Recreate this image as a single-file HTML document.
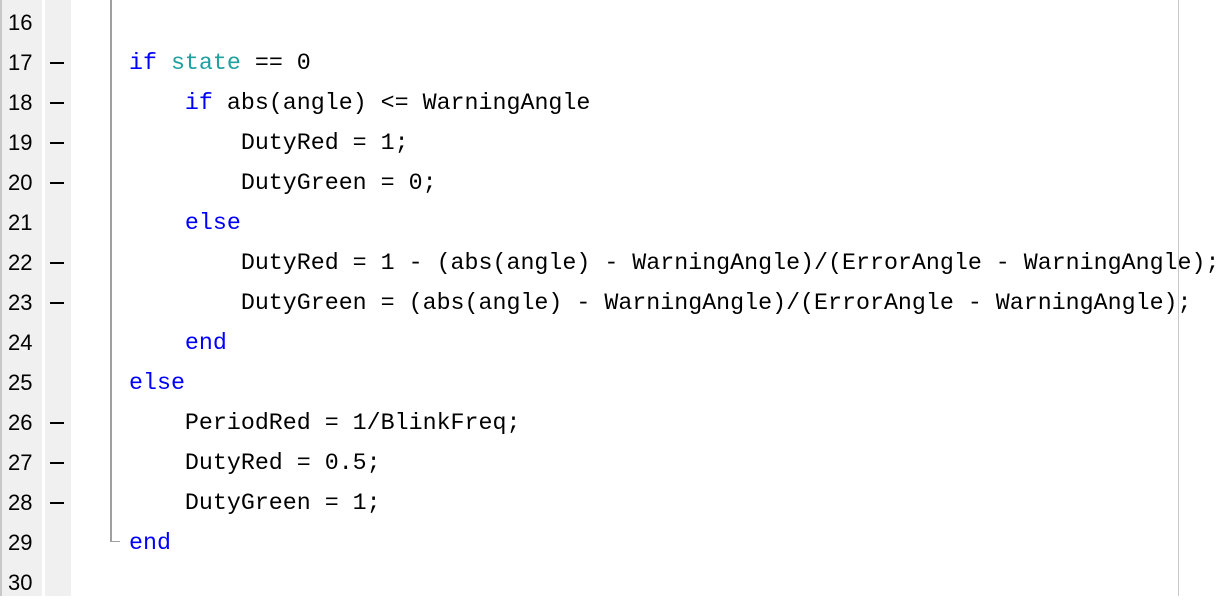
<!DOCTYPE html>
<html><head><style>
body{margin:0;width:1232px;height:596px;overflow:hidden;background:#fff;position:relative;font-family:"Liberation Mono",monospace;}
.g1{position:absolute;left:0;top:0;width:42px;height:596px;background:#f0f0f0;border-left:2px solid #c8c8c8;box-sizing:border-box}
.g2{position:absolute;left:45px;top:0;width:26px;height:596px;background:#f0f0f0}
.tree{position:absolute;left:110px;top:0;width:2px;height:542px;background:#a0a0a0}
.hook{position:absolute;left:110px;top:541px;width:10px;height:1px;background:#a0a0a0}
.rm{position:absolute;left:1178px;top:0;width:1px;height:596px;background:#c8c8c8}
.row{position:absolute;left:0;height:40px;line-height:40px;}
.n{position:absolute;left:8px;top:1px;width:34px;font-family:"Liberation Sans",sans-serif;font-size:22px;color:#000}
.d{position:absolute;left:50px;top:20px;width:14px;height:2px;background:#000}
.c{position:absolute;left:129px;top:1px;font-size:23.3px;white-space:pre;color:#000}
.k{color:#0000ff}.v{color:#20a0a0}
</style></head><body>
<div class="g1"></div><div class="g2"></div><div class="tree"></div><div class="hook"></div><div class="rm"></div>
<div class="row" style="top:2px"><span class="n">16</span></div>
<div class="row" style="top:42px"><span class="n">17</span><span class="d"></span><span class="c"><span class="k">if</span> <span class="v">state</span> == 0</span></div>
<div class="row" style="top:82px"><span class="n">18</span><span class="d"></span><span class="c">    <span class="k">if</span> abs(angle) &lt;= WarningAngle</span></div>
<div class="row" style="top:122px"><span class="n">19</span><span class="d"></span><span class="c">        DutyRed = 1;</span></div>
<div class="row" style="top:162px"><span class="n">20</span><span class="d"></span><span class="c">        DutyGreen = 0;</span></div>
<div class="row" style="top:202px"><span class="n">21</span><span class="c">    <span class="k">else</span></span></div>
<div class="row" style="top:242px"><span class="n">22</span><span class="d"></span><span class="c">        DutyRed = 1 - (abs(angle) - WarningAngle)/(ErrorAngle - WarningAngle);</span></div>
<div class="row" style="top:282px"><span class="n">23</span><span class="d"></span><span class="c">        DutyGreen = (abs(angle) - WarningAngle)/(ErrorAngle - WarningAngle);</span></div>
<div class="row" style="top:322px"><span class="n">24</span><span class="c">    <span class="k">end</span></span></div>
<div class="row" style="top:362px"><span class="n">25</span><span class="c"><span class="k">else</span></span></div>
<div class="row" style="top:402px"><span class="n">26</span><span class="d"></span><span class="c">    PeriodRed = 1/BlinkFreq;</span></div>
<div class="row" style="top:442px"><span class="n">27</span><span class="d"></span><span class="c">    DutyRed = 0.5;</span></div>
<div class="row" style="top:482px"><span class="n">28</span><span class="d"></span><span class="c">    DutyGreen = 1;</span></div>
<div class="row" style="top:522px"><span class="n">29</span><span class="c"><span class="k">end</span></span></div>
<div class="row" style="top:562px"><span class="n">30</span></div>
</body></html>
